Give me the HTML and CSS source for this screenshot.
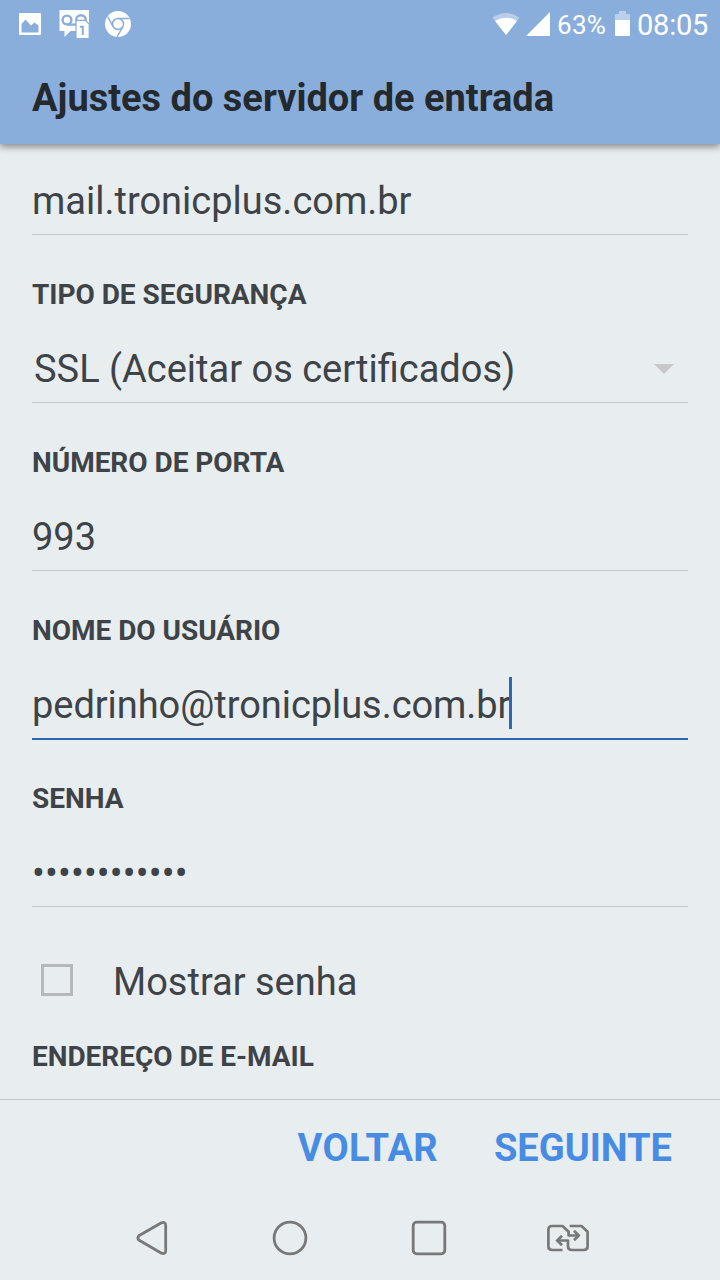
FILE: index.html
```html
<!DOCTYPE html>
<html lang="pt-BR">
<head>
<meta charset="utf-8">
<title>Ajustes do servidor de entrada</title>
<link rel="stylesheet" href="styles.css">
</head>
<body>
<div class="screen">
  <header class="header">
    <div class="status">
      <svg class="status-left" width="140" height="50" viewBox="0 0 140 50">
        <path fill="#fff" fill-rule="evenodd" d="M20 13h20a1 1 0 0 1 1 1v20a1 1 0 0 1-1 1H20a1 1 0 0 1-1-1V14a1 1 0 0 1 1-1zM21.500 32.500h17v-7l-4-3-3.500 3-5.500-6-4 4.500z"/>
        <path fill="#fff" d="M59.500 10H89v15H76V31H70.500L64.500 37V31H59.500z"/>
        <g fill="none" stroke="#8aaedc" stroke-width="2.400">
          <circle cx="67" cy="20" r="4.400"/>
          <circle cx="81" cy="20" r="4.800"/>
          <path d="M67 24.600H76"/>
        </g>
        <path fill="#fff" stroke="#8aaedc" stroke-width="1.200" d="M77.500 20.400h8l3.700 3.700V37a1.500 1.500 0 0 1-1.500 1.500H77.500a1.500 1.500 0 0 1-1.500-1.500V22a1.500 1.500 0 0 1 1.500-1.600z"/>
        <path fill="none" stroke="#8aaedc" stroke-width="2" d="M79.800 26.800h3v8.200"/>
        <circle cx="118" cy="24" r="13" fill="#fff"/>
        <g fill="none" stroke="#8aaedc" stroke-width="1.500">
          <circle cx="118" cy="24" r="5.500"/>
          <path d="M118 18.500h11.500M113.200 26.800L107.600 16.500M122.800 26.800L117 37"/>
        </g>
      </svg>
      <div class="status-right">
        <svg class="signals" width="60" height="50" viewBox="0 0 60 50">
          <path fill="#fff" opacity=".4" d="M2.500 17.500Q16 8.500 29.500 17.500L16 35z"/>
          <path fill="#fff" d="M5 21Q16 14.500 27 21L16 35z"/>
          <path fill="#fff" d="M36 36L60 12v24z"/>
        </svg>
        <span class="percent">63%</span>
        <svg class="battery" width="15" height="50" viewBox="0 0 15 50">
          <path fill="#fff" opacity=".42" d="M4 11h7v3h3a1 1 0 0 1 1 1v5H0v-5a1 1 0 0 1 1-1h3z"/>
          <path fill="#fff" d="M0 20h15v15a1 1 0 0 1-1 1H1a1 1 0 0 1-1-1z"/>
        </svg>
        <span class="clock">08:05</span>
      </div>
    </div>
    <h1 class="title">Ajustes do servidor de entrada</h1>
  </header>

  <main class="form">
    <div class="field field-first"><div class="value">mail.tronicplus.com.br</div></div>
    <div class="field">
      <div class="label">TIPO DE SEGURANÇA</div>
      <div class="value select"><span>SSL (Aceitar os certificados)</span><svg width="20" height="10" viewBox="0 0 20 10"><path fill="#c6c8ca" d="M0 0h20L10 10z"/></svg></div>
    </div>
    <div class="field">
      <div class="label">NÚMERO DE PORTA</div>
      <div class="value">993</div>
    </div>
    <div class="field focused">
      <div class="label">NOME DO USUÁRIO</div>
      <div class="value"><span class="typed">pedrinho@tronicplus.com.br</span><i class="caret"></i></div>
    </div>
    <div class="field">
      <div class="label">SENHA</div>
      <div class="value password">••••••••••••</div>
    </div>
    <div class="check-row"><span class="checkbox"></span><span>Mostrar senha</span></div>
    <div class="label email-label">ENDEREÇO DE E-MAIL</div>
  </main>

  <footer class="actions"><span class="back">VOLTAR</span><span>SEGUINTE</span></footer>
  <nav class="nav">
    <svg width="720" height="84" viewBox="0 1196 720 84" fill="none" stroke="#777979" stroke-width="2.800" stroke-linejoin="round">
      <path d="M138.800 1235.800Q137 1238 138.800 1240L161.500 1253.200Q165.700 1254.500 165.700 1250.500V1225.500Q165.700 1221.500 161.500 1222.800z"/>
      <circle cx="290" cy="1238" r="15.900"/>
      <rect x="413.200" y="1222.200" width="31.600" height="31.600" rx="3.500"/>
      <g stroke-width="2.700">
        <path d="M562.500 1250H552.200Q548.400 1250 548.400 1246.200V1229.800Q548.400 1226 552.200 1226H562.500L568.600 1231.700V1235.500H578"/>
        <path d="M569.700 1226H581.500L587.600 1231.700V1246.200Q587.600 1250 583.800 1250H572Q568 1250 568 1246.200V1240.500H558"/>
        <path stroke-linejoin="miter" d="M574 1230.800L578.700 1235.500 574 1240.200M562 1235.800L557.300 1240.500 562 1245.200"/>
      </g>
    </svg>
  </nav>
</div>
</body>
</html>
```
FILE: styles.css
```css
* { box-sizing: border-box; }
body { margin: 0; font-family: Roboto, "Liberation Sans", sans-serif; background: #e8edf0; color: #3e4347; }
.screen { width: 720px; height: 1280px; display: flex; flex-direction: column; overflow: hidden; }
.header { height: 144px; flex: none; background: #8aaedc; box-shadow: 0 3px 7px rgba(0, 0, 0, .42); }
.status { height: 50px; display: flex; justify-content: space-between; color: #fff; }
.status-right { display: flex; line-height: 51px; padding-right: 12px; }
.signals { margin-right: 7px; }
.percent { width: 58px; font-size: 26px; letter-spacing: .3px; }
.clock { margin-left: 7px; font-size: 29px; letter-spacing: -.25px; white-space: nowrap; }
.title { margin: 0; padding: 24px 32px 0; font-size: 38px; line-height: 48px; font-weight: 700; color: #24292e; white-space: nowrap; }
.form { height: 955px; flex: none; padding: 0 32px; }
.field { height: 168px; padding: 40px 0 9px; border-bottom: 1px solid #c3c7ca; display: flex; flex-direction: column; justify-content: space-between; }
.field-first { height: 91px; padding-top: 33px; }
.label { font-size: 28px; line-height: 40px; font-weight: 700; letter-spacing: -.03px; white-space: nowrap; }
.value { font-size: 38px; line-height: 48px; height: 48px; display: flex; white-space: nowrap; }
.select { justify-content: space-between; align-items: center; padding: 0 14px 0 2px; }
.focused { height: 169px; margin-bottom: -1px; border-bottom: 2px solid #2b67b5; }
.typed { letter-spacing: -.05px; }
.caret { width: 3px; height: 52px; margin: -4px 0 0 -1px; background: #2b67b5; flex: none; }
.password { letter-spacing: .15px; }
.check-row { height: 48px; margin-top: 51px; padding-left: 9px; display: flex; align-items: center; gap: 40px; font-size: 38px; line-height: 48px; }
.checkbox { width: 32px; height: 32px; margin-top: -4px; border: 3px solid #b5b9bc; }
.email-label { margin-top: 31px; }
.actions { height: 97px; flex: none; border-top: 1px solid #c3c7ca; display: flex; justify-content: flex-end; gap: 56px; padding: 24px 48px 0 0; font-size: 38px; line-height: 48px; font-weight: 700; color: #478ce2; }
.back { letter-spacing: .3px; }
.nav { height: 84px; }
.nav svg { display: block; }
```
